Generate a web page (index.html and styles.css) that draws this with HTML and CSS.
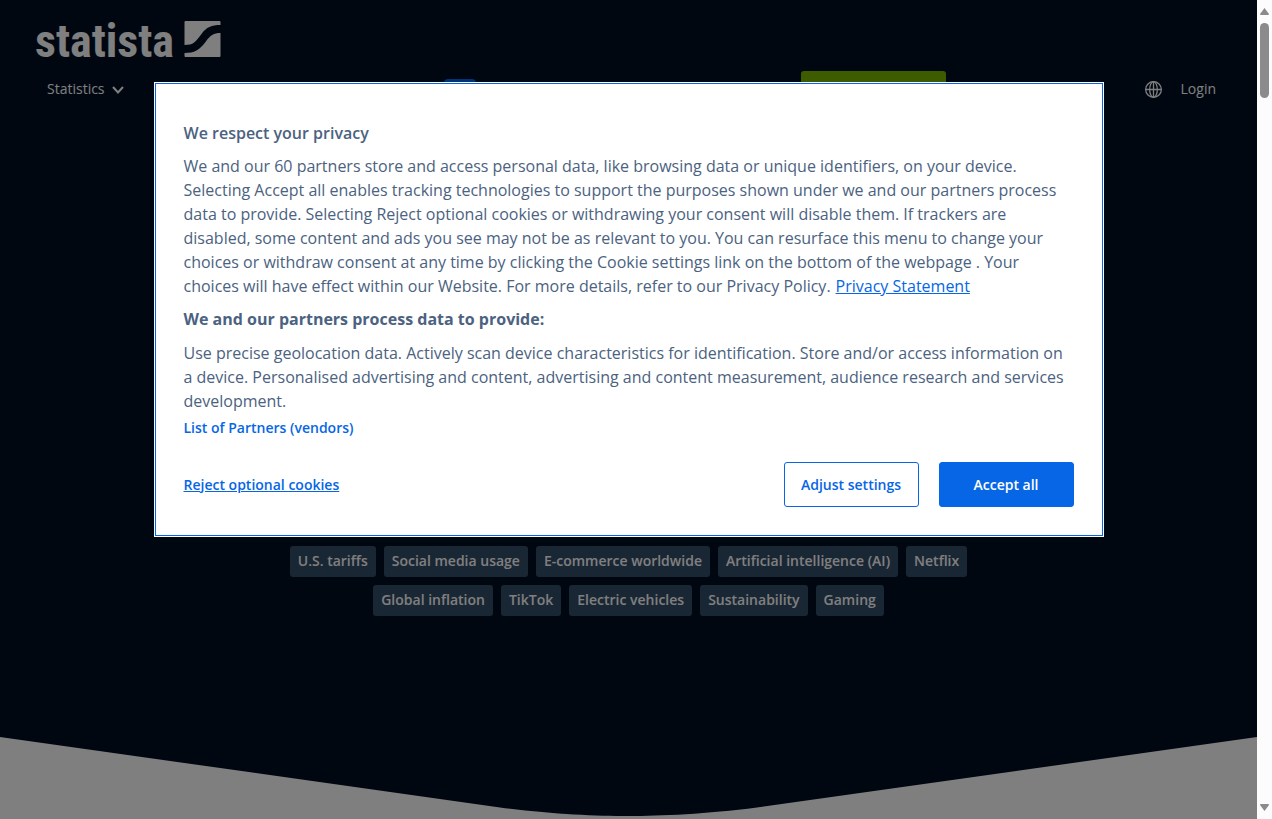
FILE: index.html
```html
<!DOCTYPE html>
<html lang="en">
<head>
    <meta charset="UTF-8">
    <meta name="viewport" content="width=device-width, initial-scale=1.0">
    <title>Statista</title>
    <link rel="stylesheet" href="styles.css">
</head>
<body>
    <div class="page">
        <header class="header">
            <a href="#" class="logo">
                <span class="logo-text">statista</span>
                <svg class="logo-mark" viewBox="0 0 36 36" aria-hidden="true">
                    <path d="M1 0H35Q36 0 36 1V4C27 4 22 6 17 13C11 21 9 24 0 24V1Q0 0 1 0Z"/>
                    <path d="M36 12V35Q36 36 35 36H1Q0 36 0 35V32C10 32 15 29 21 21C26 14 29 12 36 12Z"/>
                </svg>
            </a>
            <nav class="nav">
                <a href="#" class="nav-link">Statistics
                    <svg class="chevron" viewBox="0 0 12 8" aria-hidden="true"><path d="M1 1L6 6.5L11 1"/></svg>
                </a>
                <span class="nav-badge"></span>
                <button type="button" class="nav-cta" aria-label="Prices &amp; Access"></button>
                <div class="nav-user">
                    <button type="button" class="globe" aria-label="Language">
                        <svg viewBox="0 0 16 16" aria-hidden="true">
                            <circle cx="8" cy="8" r="7.4"/>
                            <ellipse cx="8" cy="8" rx="3.6" ry="7.4"/>
                            <path d="M8 .5V15.5M.5 8H15.5"/>
                        </svg>
                    </button>
                    <a href="#" class="nav-link">Login</a>
                </div>
            </nav>
        </header>

        <main class="hero">
            <div class="tags">
                <a href="#" class="tag">U.S. tariffs</a>
                <a href="#" class="tag">Social media usage</a>
                <a href="#" class="tag">E-commerce worldwide</a>
                <a href="#" class="tag">Artificial intelligence (AI)</a>
                <a href="#" class="tag">Netflix</a>
                <a href="#" class="tag">Global inflation</a>
                <a href="#" class="tag">TikTok</a>
                <a href="#" class="tag">Electric vehicles</a>
                <a href="#" class="tag">Sustainability</a>
                <a href="#" class="tag">Gaming</a>
            </div>
            <svg class="wave" viewBox="0 0 1257 82" preserveAspectRatio="none" aria-hidden="true">
                <path d="M0 0L500 70.5C550 77 595 79 628 79S707 77 757 70.5L1257 0V82H0Z"/>
            </svg>
        </main>

        <!-- Cookie consent -->
        <div class="overlay">
            <div class="consent" role="dialog" aria-labelledby="consent-title">
                <h2 id="consent-title" class="consent-title">We respect your privacy</h2>
                <p class="consent-text">We and our 60 partners store and access personal data, like browsing data or unique identifiers, on your device. Selecting Accept all enables tracking technologies to support the purposes shown under we and our partners process data to provide. Selecting Reject optional cookies or withdrawing your consent will disable them. If trackers are disabled, some content and ads you see may not be as relevant to you. You can resurface this menu to change your choices or withdraw consent at any time by clicking the Cookie settings link on the bottom of the webpage . Your choices will have effect within our Website. For more details, refer to our Privacy Policy.<a href="#" class="privacy-link">Privacy Statement</a></p>
                <h3 class="consent-subtitle">We and our partners process data to provide:</h3>
                <p class="consent-text">Use precise geolocation data. Actively scan device characteristics for identification. Store and/or access information on a device. Personalised advertising and content, advertising and content measurement, audience research and services development.</p>
                <button type="button" class="link-btn">List of Partners (vendors)</button>
                <div class="consent-actions">
                    <button type="button" class="link-btn reject">Reject optional cookies</button>
                    <button type="button" class="btn">Adjust settings</button>
                    <button type="button" class="btn btn-primary">Accept all</button>
                </div>
            </div>
        </div>
    </div>

    <div class="scrollbar" aria-hidden="true">
        <svg class="arrow" viewBox="0 0 9 7"><path d="M4.5 0L9 6Q9 7 8 7H1Q0 7 0 6Z"/></svg>
        <div class="thumb"></div>
        <svg class="arrow arrow-down" viewBox="0 0 9 7"><path d="M4.5 7L9 1Q9 0 8 0H1Q0 0 0 1Z"/></svg>
    </div>
</body>
</html>
```
FILE: styles.css
```css
* {
    margin: 0;
    padding: 0;
    box-sizing: border-box;
}
body {
    font-family: "Open Sans", sans-serif;
    height: 100vh;
    display: flex;
    overflow: hidden;
}
button {
    font-family: inherit;
    border: none;
    background: none;
    cursor: pointer;
}
a {
    color: inherit;
    text-decoration: none;
}
.page {
    position: relative;
    flex: 1;
    display: flex;
    flex-direction: column;
    background-color: #000f22;
    color: #fff;
}

/* Header */
.header {
    padding: 21px 41px 0 35px;
}
.logo {
    display: flex;
    align-items: baseline;
    gap: 10px;
    height: 37px;
}
.logo-text {
    font-family: "Roboto Condensed", "Open Sans Condensed", Roboto, sans-serif;
    font-size: 46px;
    font-weight: bold;
    line-height: 36px;
}
.logo-mark {
    width: 37px;
    height: 36px;
    fill: #fff;
}
.nav {
    display: grid;
    grid-template-columns: 397fr 357fr 343fr auto;
    align-items: center;
    margin-top: 13px;
    padding-left: 12px;
}
.nav-link {
    font-size: 14px;
    line-height: 20px;
}
.chevron {
    width: 12px;
    height: 8px;
    margin-left: 4px;
    fill: none;
    stroke: #fff;
    stroke-width: 2;
}
.nav-badge {
    width: 32px;
    height: 20px;
    border-radius: 4px;
    background-color: #0666e5;
}
.nav-cta {
    width: 145px;
    height: 36px;
    border-radius: 3px;
    background-color: #7ab800;
}
.nav-user {
    display: flex;
    align-items: center;
    gap: 19px;
}
.globe {
    display: flex;
}
.globe svg {
    width: 17px;
    height: 17px;
    fill: none;
    stroke: #fff;
    stroke-width: 1.2;
}

/* Hero */
.hero {
    flex: 1;
    display: flex;
    flex-direction: column;
    justify-content: flex-end;
}
.tags {
    display: flex;
    flex-wrap: wrap;
    justify-content: center;
    gap: 8px;
    width: 100%;
    max-width: 720px;
    margin: 0 auto 121px;
}
.tag {
    padding: 5px 8px 6px;
    border-radius: 3px;
    background-color: #334c68;
    font-size: 14px;
    font-weight: 600;
    line-height: 20px;
}
.wave {
    display: block;
    width: 100%;
    height: 82px;
    fill: #fff;
}

/* Consent dialog */
.overlay {
    position: absolute;
    inset: 0;
    display: flex;
    justify-content: center;
    align-items: flex-start;
    padding-top: 10vh;
    background-color: rgba(0, 0, 0, 0.5);
}
.consent {
    width: 100%;
    max-width: 948px;
    margin-top: 1px;
    padding: 37px 28px 28px;
    border: 1px solid #0666e5;
    outline: 1px solid #fff;
    background-color: #fff;
    color: #4b6281;
}
.consent-title {
    margin-bottom: 9px;
    font-size: 16px;
    font-weight: 600;
    line-height: 24px;
}
.consent-subtitle {
    margin: 9px 0 10px;
    font-size: 16px;
    font-weight: 700;
    line-height: 24px;
}
.consent-text {
    font-size: 16px;
    line-height: 24px;
}
.privacy-link {
    margin-left: 5px;
    color: #0666e5;
    text-decoration: underline;
}
.link-btn {
    display: block;
    margin-top: 5px;
    color: #0666e5;
    font-size: 14px;
    font-weight: 600;
    line-height: 20px;
}
.consent-actions {
    display: flex;
    align-items: center;
    gap: 20px;
    margin-top: 24px;
}
.reject {
    margin: 0 auto 0 0;
    text-decoration: underline;
    line-height: 21px;
}
.btn {
    width: 135px;
    height: 45px;
    border: 1px solid #0666e5;
    border-radius: 3px;
    color: #0666e5;
    font-size: 14px;
    font-weight: 600;
}
.btn-primary {
    background-color: #0666e5;
    color: #fff;
}

/* Scrollbar */
.scrollbar {
    display: flex;
    flex-direction: column;
    align-items: center;
    width: 15px;
    padding: 8px 0;
    background-color: #fcfcfc;
}
.arrow {
    width: 9px;
    height: 7px;
    fill: #8b8b8b;
}
.arrow-down {
    margin-top: auto;
}
.thumb {
    width: 9px;
    height: 75px;
    margin-top: 8px;
    border-radius: 5px;
    background-color: #8b8b8b;
}
```
